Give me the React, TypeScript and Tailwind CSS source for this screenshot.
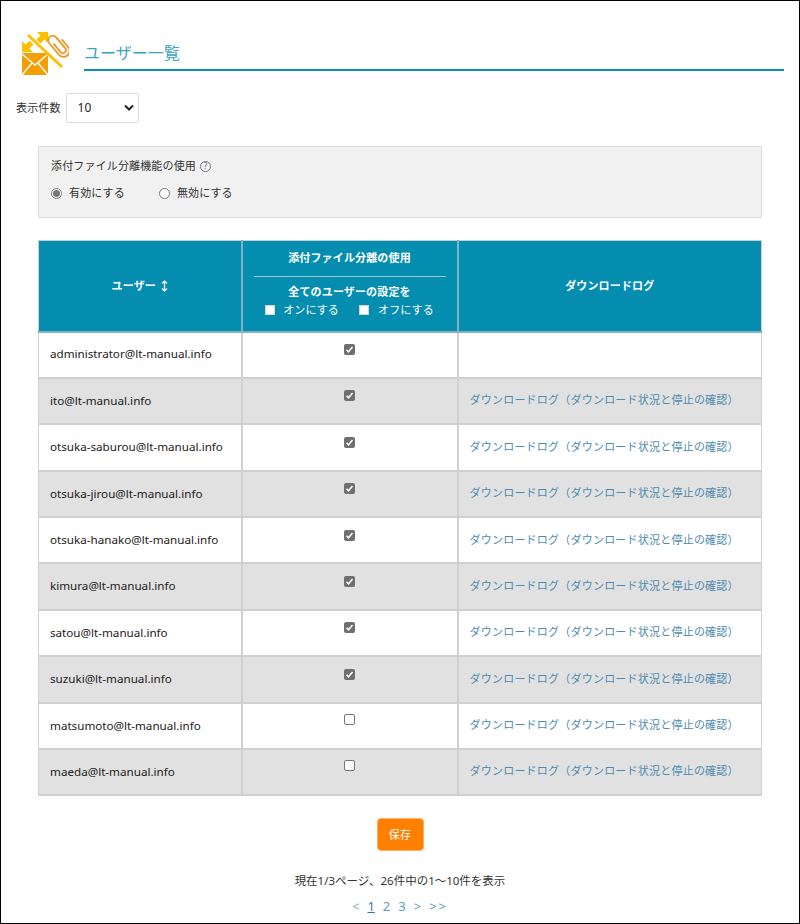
const users: [string, boolean, boolean][] = [
  ["administrator@lt-manual.info", true, false],
  ["ito@lt-manual.info", true, true],
  ["otsuka-saburou@lt-manual.info", true, true],
  ["otsuka-jirou@lt-manual.info", true, true],
  ["otsuka-hanako@lt-manual.info", true, true],
  ["kimura@lt-manual.info", true, true],
  ["satou@lt-manual.info", true, true],
  ["suzuki@lt-manual.info", true, true],
  ["matsumoto@lt-manual.info", false, true],
  ["maeda@lt-manual.info", false, true],
];

function Logo() {
  return (
    <svg width="48" height="44" viewBox="0 0 48 44" className="shrink-0">
      <path d="M1 22h26v22H1z" fill="#f59e00" />
      <path d="M1 23l13 11L27 23M1 44l10-12M27 44L17 32" fill="none" stroke="#fff" strokeWidth="1.4" />
      <path d="M7 4l34 32" stroke="#fdc000" strokeWidth="3" />
      <path d="M1 10v11h11l-3.500-3.500 4-4-4-4-4 4z" fill="#fdc000" />
      <path d="M27 1v11l-3.500-3.500-4 4-4-4 4-4L16 1z" fill="#fdc000" />
      <g transform="translate(38 14.500) rotate(-40)">
        <path
          d="M-3 -5V6a3 3 0 0 0 6 0V-8a4.500 4.500 0 0 0 -9 0V7a6 6 0 0 0 12 0V-3"
          fill="none"
          stroke="#f0941a"
          strokeWidth="1.800"
        />
      </g>
    </svg>
  );
}

function GrayCheck({ checked }: { checked: boolean }) {
  return checked ? (
    <span className="inline-flex w-[11px] h-[11px] rounded-[2px] bg-[#6f6f6f] items-center justify-center">
      <svg width="9" height="9" viewBox="0 0 9 9">
        <path d="M1.500 4.800l2 2 4-4.800" fill="none" stroke="#fff" strokeWidth="1.500" />
      </svg>
    </span>
  ) : (
    <span className="inline-block w-[11px] h-[11px] rounded-[2px] bg-white border border-[#767676]" />
  );
}

function WhiteBox() {
  return <span className="inline-block w-[10px] h-[10px] bg-white border border-[#d5d5d5]" />;
}

function Radio({ on }: { on: boolean }) {
  return (
    <span className="inline-flex w-[11px] h-[11px] rounded-full border border-[#767676] bg-white items-center justify-center">
      {on && <span className="block w-[7px] h-[7px] rounded-full bg-[#777]" />}
    </span>
  );
}

export default function App() {
  return (
    <div className="w-[800px] h-[924px] border border-black bg-white text-[11px] tracking-[0.15px] text-[#333] overflow-hidden font-['Noto_Sans','Noto_Sans_CJK_JP',sans-serif]">
      <div className="flex items-end pl-[20px] pr-[15px] pt-[30px]">
        <Logo />
        <div className="flex-1 ml-[15px] h-[40px] pt-[6px] flex items-center border-b-2 border-[#0a8fb0] text-[16px] tracking-normal text-[#3aa3c4] mb-[4px]">
          ユーザー一覧
        </div>
      </div>
      <div className="flex items-center mt-[18px] ml-[15px]">
        <span>表示件数</span>
        <div className="ml-[5px] w-[73px] h-[30px] border border-[#dcdcdc] rounded-[2px] flex items-center justify-between pl-[11px] pr-[4px] text-[12px] text-[#222]">
          <span>10</span>
          <svg width="10" height="8" viewBox="0 0 10 8">
            <path d="M1 1.500l4 4 4-4" fill="none" stroke="#222" strokeWidth="2" />
          </svg>
        </div>
      </div>

      <div className="ml-[37px] mt-[23px] w-[724px] h-[72px] border border-[#dadee3] bg-[#f1f1f1] pl-[12px] pt-[10px]">
        <div className="flex items-center h-[18px]">
          添付ファイル分離機能の使用
          <span className="ml-[4px] w-[11px] h-[11px] rounded-full border border-[#777] text-[8px] leading-none text-[#666] flex items-center justify-center">?</span>
        </div>
        <div className="flex items-center mt-[9px] h-[18px]">
          <Radio on />
          <span className="ml-[7px]">有効にする</span>
          <span className="ml-[34px] flex items-center">
            <Radio on={false} />
            <span className="ml-[7px]">無効にする</span>
          </span>
        </div>
      </div>

      <table className="ml-[37px] mt-[22px] w-[724px] table-fixed border-collapse">
        <colgroup>
          <col className="w-[203px]" />
          <col className="w-[216px]" />
          <col />
        </colgroup>
        <thead>
          <tr className="bg-[#058db0] text-white font-bold h-[91px]">
            <th className="border-t border-l border-r-2 border-b-2 border-t-[#c5ced2] border-l-[#cfcfcf] border-r-[#7fb3c1] border-b-[#7fb3c1] align-middle font-bold">
              <span className="inline-flex items-center justify-center gap-[5px]">
                ユーザー
                <svg width="7" height="12" viewBox="0 0 7 12">
                  <path d="M3.500 1v10M1 3.500L3.500 1 6 3.500M1 8.500L3.500 11 6 8.500" fill="none" stroke="#fff" strokeWidth="1.200" />
                </svg>
              </span>
            </th>
            <th className="border-t border-x-2 border-b-2 border-t-[#c5ced2] border-x-[#7fb3c1] border-b-[#7fb3c1] px-[11px] align-top font-bold">
              <div className="h-[36px] flex items-center justify-center border-b border-[#9fcbd7]">
                添付ファイル分離の使用
              </div>
              <div className="mt-[7px] leading-[16px]">全てのユーザーの設定を</div>
              <div className="flex justify-center items-center font-normal h-[18px] mt-[1px]">
                <WhiteBox />
                <span className="ml-[8px]">オンにする</span>
                <span className="ml-[20px] flex"><WhiteBox /></span>
                <span className="ml-[9px]">オフにする</span>
              </div>
            </th>
            <th className="border-t border-r border-l-2 border-b-2 border-t-[#c5ced2] border-r-[#cfcfcf] border-l-[#7fb3c1] border-b-[#7fb3c1] align-middle font-bold">ダウンロードログ</th>
          </tr>
        </thead>
        <tbody>
          {users.map(([email, checked, hasLog], i) => (
            <tr key={email} className={`h-[46.400px] ${i % 2 === 1 ? "bg-[#e1e1e1]" : "bg-white"}`}>
              <td className="border-y-2 border-r-2 border-l border-[#d0d0d0] pl-[11px] pb-[1px] text-[11.650px] tracking-normal text-[#222]">{email}</td>
              <td className="border-2 border-[#d0d0d0] text-center align-middle pb-[9px]">
                <GrayCheck checked={checked} />
              </td>
              <td className="border-y-2 border-l-2 border-r border-[#d0d0d0] pl-[11px] pb-[1px] text-[#4c8cb0] tracking-[0.22px]">
                {hasLog && "ダウンロードログ（ダウンロード状況と停止の確認）"}
              </td>
            </tr>
          ))}
        </tbody>
      </table>

      <div className="flex justify-center mt-[22px]">
        <button className="w-[47px] h-[33px] rounded-[4px] bg-[#ff8000] border border-[#ffb066] text-white text-[11px]">保存</button>
      </div>
      <div className="text-center mt-[21px] text-[11.500px] tracking-normal leading-[18px]">現在1/3ページ、26件中の1～10件を表示</div>
      <div className="flex justify-center gap-[8px] mt-[8px] text-[13px] leading-[16px] tracking-normal text-[#5b9cc0]">
        <span className="text-[#8aa]">&lt;</span>
        <span className="underline text-[#2f7fa5]">1</span>
        <span>2</span>
        <span>3</span>
        <span>&gt;</span>
        <span className="tracking-[2px]">&gt;&gt;</span>
      </div>
    </div>
  );
}
